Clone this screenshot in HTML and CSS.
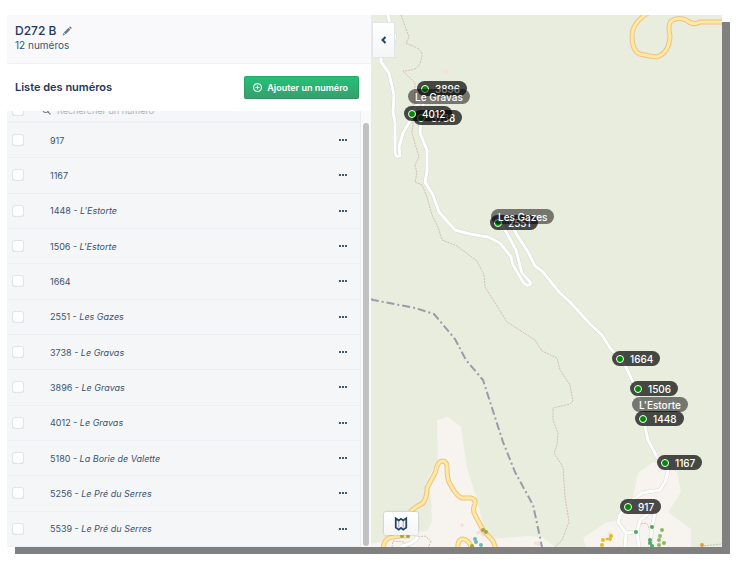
FILE: index.html
```html
<!DOCTYPE html>
<html lang="fr">
<head>
<meta charset="utf-8">
<meta name="viewport" content="width=device-width, initial-scale=1">
<title>D272 B</title>
<link rel="stylesheet" href="styles.css">
</head>
<body>
<main class="window">
  <section class="sidebar">
    <header class="street">
      <h1>D272 B
        <svg class="pencil" viewBox="0 0 16 16" aria-hidden="true"><path d="M1 15l1.200-4 2.800 2.800zM3 10.200l7.600-7.600 2.800 2.800-7.600 7.600zM11.400 1.800l1-1c.9-.9 3.700 1.900 2.800 2.800l-1 1z"/></svg>
      </h1>
      <p>12 numéros</p>
    </header>
    <div class="toolbar">
      <h2>Liste des numéros</h2>
      <button class="add" type="button">
        <svg viewBox="0 0 16 16" aria-hidden="true"><circle cx="8" cy="8" r="7"/><path d="M8 4.500v7M4.500 8h7"/></svg>
        Ajouter un numéro
      </button>
    </div>
    <div class="scroller">
      <div class="list">
        <div class="row search">
          <input type="checkbox" aria-label="Tout sélectionner">
          <svg viewBox="0 0 16 16" aria-hidden="true"><circle cx="6.500" cy="6.500" r="5"/><path d="M10.500 10.500L15 15"/></svg>
          <input type="search" placeholder="Rechercher un numéro" aria-label="Rechercher un numéro">
        </div>
        <div class="row"><input type="checkbox" id="n917"><label for="n917">917</label><button type="button" class="more" aria-label="Options"><i></i><i></i><i></i></button></div>
        <div class="row"><input type="checkbox" id="n1167"><label for="n1167">1167</label><button type="button" class="more" aria-label="Options"><i></i><i></i><i></i></button></div>
        <div class="row"><input type="checkbox" id="n1448"><label for="n1448">1448 - <em>L'Estorte</em></label><button type="button" class="more" aria-label="Options"><i></i><i></i><i></i></button></div>
        <div class="row"><input type="checkbox" id="n1506"><label for="n1506">1506 - <em>L'Estorte</em></label><button type="button" class="more" aria-label="Options"><i></i><i></i><i></i></button></div>
        <div class="row"><input type="checkbox" id="n1664"><label for="n1664">1664</label><button type="button" class="more" aria-label="Options"><i></i><i></i><i></i></button></div>
        <div class="row"><input type="checkbox" id="n2551"><label for="n2551">2551 - <em>Les Gazes</em></label><button type="button" class="more" aria-label="Options"><i></i><i></i><i></i></button></div>
        <div class="row"><input type="checkbox" id="n3738"><label for="n3738">3738 - <em>Le Gravas</em></label><button type="button" class="more" aria-label="Options"><i></i><i></i><i></i></button></div>
        <div class="row"><input type="checkbox" id="n3896"><label for="n3896">3896 - <em>Le Gravas</em></label><button type="button" class="more" aria-label="Options"><i></i><i></i><i></i></button></div>
        <div class="row"><input type="checkbox" id="n4012"><label for="n4012">4012 - <em>Le Gravas</em></label><button type="button" class="more" aria-label="Options"><i></i><i></i><i></i></button></div>
        <div class="row"><input type="checkbox" id="n5180"><label for="n5180">5180 - <em>La Borie de Valette</em></label><button type="button" class="more" aria-label="Options"><i></i><i></i><i></i></button></div>
        <div class="row"><input type="checkbox" id="n5256"><label for="n5256">5256 - <em>Le Pré du Serres</em></label><button type="button" class="more" aria-label="Options"><i></i><i></i><i></i></button></div>
        <div class="row"><input type="checkbox" id="n5539"><label for="n5539">5539 - <em>Le Pré du Serres</em></label><button type="button" class="more" aria-label="Options"><i></i><i></i><i></i></button></div>
      </div>
      <div class="track"><div class="thumb"></div></div>
    </div>
  </section>

  <section class="map" aria-label="Carte">
    <svg class="tiles" viewBox="371 15 351 532" preserveAspectRatio="xMinYMin slice" aria-hidden="true">
      <defs>
        <path id="lane" d="M388 15L391 30 395 36 393 43 381 58 381 62 389 73 394 95 393 112 395 123 395 153Q396 158 400 156L399 147 403 133 410 121 415 107 423 100 423 107 421 120 420 133 427 150 427 172 425 182 433 195 439 212 455 230 470 234 488 237 500 243 511 257 513 265 523 282Q528 288 531 283L522 273 519 262 516 250 505 230 499 220 508 217 517 235 528 252 535 266 542 271 560 293 570 302 590 324 602 335 610 348 619 358 625 365 633 382 641 402 645 427 648 440 657 457 667 465 668 472 665 482 660 490 642 493 630 502 620 515 618 522 626 533 625 547M626 533L637 532 640 520 650 512 655 513 652 527 650 547M637 532L639 547M401 546Q412 545 418 537"/>
        <path id="road" d="M410 512L416 507 423 503Q427 497 427 488L435 473Q438 461 442 461 447 461 447 467 447 480 450 484 457 497 462 498H471Q476 499 475 504 472 510 475 515L483 530 493 541 496 549M383 549Q384 540 389 538 398 535 410 536M458 549Q457 539 463 539 468 539 472 548M648 13Q632 23 632 36 632 51 640 54 648 56 657 57 669 53 670 36 667 22 673 20 679 17 686 20 693 26 700 22H724"/>
      </defs>
      <path fill="#e8edde" d="M371 15h1600v1600H371z"/>
      <path fill="#f7f4ef" d="M437 420L448 417 461 427 467 468 477 499 483 525 492 539 527 536 542 537 556 548H371V544L383 541 397 533 427 531 432 522 431 497 428 478 438 460zM583 538L605 523 615 521 632 500 638 473 653 462 677 472 681 492 668 512 691 529V548H586z"/>
      <path fill="#f5e1d8" d="M444 69l5 1v4l-5-1zM476 532l6-3 4 4-3 4-3-3-3 1zM534 542l5-1 2 5-6-1zM460 524l3-1 1 3-3 1zM607 534l3-3 3 3-3 3z"/>
      <g class="trail">
        <path d="M401 15L409 37 406 43 415 47Q422 50 422 56 420 69 411 70L403 71 415 83 414 113 412 133 419 157 415 165 417 173 415 182 422 185 427 197 432 215 438 227 442 240 457 246 477 261 484 275 485 287 507 322 535 340 542 351 557 358 560 370 570 385 573 401 570 404 553 408 553 420 558 433 557 445 554 453 563 467 565 497 569 522 562 540 555 547"/>
        <path d="M392 547L393 541 404 542 410 547M418 537L425 536 431 541 428 548M641 524q8-3 8 6M701 546L722 544"/>
      </g>
      <use href="#lane" class="lane-edge"/><use href="#lane" class="lane"/>
      <use href="#road" class="road-edge"/><use href="#road" class="road"/>
      <path class="border-line" d="M371 299L373 300 415 308 434 314 455 339 466 360 483 380 503 442 515 472 533 505 538 528 542 547"/>
      <g fill="#a6a63c"><circle cx="483" cy="530" r="2"/><circle cx="486" cy="532" r="2"/><circle cx="402" cy="536" r="2"/><circle cx="408" cy="536" r="2"/><circle cx="472" cy="546" r="2"/></g>
      <g fill="#75b8b2"><circle cx="475" cy="539" r="2"/><circle cx="476" cy="542" r="2"/><circle cx="481" cy="545" r="2"/></g>
      <g fill="#e0bd36"><circle cx="611" cy="536" r="2"/><circle cx="610" cy="539" r="2"/><circle cx="607" cy="539" r="1.500"/><circle cx="603" cy="540" r="2"/><circle cx="602" cy="545" r="2"/></g>
      <g fill="#4da766"><circle cx="636" cy="532" r="2"/><circle cx="652" cy="527" r="2"/><circle cx="650" cy="540" r="2"/><circle cx="650" cy="543" r="2"/><circle cx="652" cy="546" r="2"/></g>
      <g fill="#8abb63"><circle cx="662" cy="530" r="2"/><circle cx="660" cy="536" r="2"/><circle cx="659" cy="540" r="2"/><circle cx="664" cy="543" r="2"/><circle cx="659" cy="545" r="2"/></g>
      <circle cx="702" cy="545" r="2" fill="#dd9a55"/>
    </svg>

    <span class="pin" style="left:46px;top:66px"><i></i>3896</span>
    <span class="pin" style="left:42px;top:95px"><i></i>3738</span>
    <span class="pin" style="left:33px;top:91px"><i></i>4012</span>
    <span class="place" style="left:37px;top:74px">Le Gravas</span>
    <span class="pin" style="left:119px;top:200px"><i></i>2551</span>
    <span class="place" style="left:120px;top:194px">Les Gazes</span>
    <span class="pin" style="left:241px;top:336px"><i></i>1664</span>
    <span class="pin" style="left:259px;top:366px"><i></i>1506</span>
    <span class="place" style="left:261px;top:382px">L'Estorte</span>
    <span class="pin" style="left:264px;top:396px"><i></i>1448</span>
    <span class="pin" style="left:286px;top:440px"><i></i>1167</span>
    <span class="pin" style="left:249px;top:484px"><i></i>917</span>

    <button class="collapse" type="button" aria-label="Réduire"><svg viewBox="0 0 8 10" aria-hidden="true"><path d="M5.500 2L2.500 5l3 3"/></svg></button>
    <button class="layers" type="button" aria-label="Fond de carte"><svg viewBox="0 0 16 16" aria-hidden="true"><path class="fold" d="M5.500 4v8M10.500 4v8"/><path d="M5.500 4L2 1.500v10.500L5.500 14.500 8 12.500l2.500 2L14 12V1.500L10.500 4 8 2z"/></svg></button>
  </section>
</main>
</body>
</html>
```
FILE: styles.css
```css
* { box-sizing: border-box; }

body {
  margin: 0;
  min-height: 100vh;
  padding: 15px 18px 21px 7px;
  display: flex;
  background: #fff;
  color: #3a5470;
  font-family: Inter, "Liberation Sans", sans-serif;
  font-size: 9px;
}

h1, h2, p { margin: 0; }
button { font: inherit; cursor: pointer; }

.window {
  flex: 1;
  display: grid;
  grid-template-columns: minmax(0, 364fr) minmax(0, 351fr);
  box-shadow: 8px 7px 0 #808080;
}

.sidebar {
  display: flex;
  flex-direction: column;
  background: #fff;
}

.street {
  padding: 8px;
  border-bottom: 1px solid #eff1f4;
  background: #f9f9fb;
}

h1, h2 {
  color: #24355f;
  line-height: 15px;
}

h1 {
  display: flex;
  align-items: center;
  gap: 6px;
  font-size: 12px;
  font-weight: 500;
}

h2 { font-size: 11px; font-weight: 600; }

.street p {
  padding-bottom: 3px;
  font-size: 10px;
  line-height: 14px;
}

.pencil {
  width: 10px;
  height: 10px;
  fill: #66788a;
}

.toolbar {
  display: flex;
  align-items: center;
  justify-content: space-between;
  padding: 12px 12px 12px 8px;
}

.add {
  display: flex;
  align-items: center;
  gap: 5px;
  height: 23px;
  padding: 0 11px 0 9px;
  border: 0;
  border-radius: 2px;
  background: linear-gradient(#23c277, #399d6c);
  box-shadow: inset 0 0 0 1px rgba(30, 110, 70, .25);
  color: #fff;
  font-weight: 600;
}

.add svg {
  width: 9px;
  height: 9px;
  fill: none;
  stroke: #fff;
  stroke-width: 2;
}

.scroller {
  flex: 1;
  display: flex;
  overflow: hidden;
}

.list {
  flex: 1;
  display: flex;
  flex-direction: column;
  margin-top: -12px;
  border-right: 1px solid #e9ecef;
  background: #f5f6f7;
}

.row {
  flex: 1 0 32px;
  display: flex;
  align-items: center;
  padding: 0 12px 0 5px;
  border-bottom: 1px solid #edf0f2;
}

.row label { flex: 1; }

.row input[type="checkbox"] {
  appearance: none;
  flex: none;
  width: 12px;
  height: 12px;
  margin: 0 26px 0 0;
  border-radius: 3px;
  background: #fff;
  box-shadow: inset 0 0 0 1px #e1e4e8, inset 0 -1px 1px #cfd5db;
}

.search { flex: 0 0 24px; border-bottom: 2px solid #edf0f2; }
.search input[type="checkbox"] { margin-right: 18px; }

.search svg {
  width: 9px;
  height: 9px;
  fill: none;
  stroke: #66788a;
  stroke-width: 2;
}

.search input[type="search"] {
  flex: 1;
  margin: 0;
  padding: 0 6px;
  border: 0;
  background: none;
  font: inherit;
}

.search input::placeholder { color: #a6b1bb; }

.more {
  display: flex;
  gap: 1px;
  padding: 4px 1px;
  border: 0;
  background: none;
}

.more i {
  width: 2px;
  height: 2px;
  background: #425a70;
}

.track {
  width: 10px;
  padding: 12px 2px 1px;
  background: #fafafa;
}

.thumb {
  height: 100%;
  border-radius: 3px;
  background: #c1c1c1;
}

.map {
  position: relative;
  overflow: hidden;
  background: #e8edde;
}

.tiles {
  position: absolute;
  width: 100%;
  height: 100%;
}

.tiles path, .tiles use { stroke-linejoin: round; }
.trail, .lane-edge, .lane, .road-edge, .road, .border-line { fill: none; }
.trail { stroke: #d3bfb0; stroke-width: 1; stroke-dasharray: 2 1; }
.lane-edge { stroke: #d5d8d0; stroke-width: 4; }
.lane { stroke: #fff; stroke-width: 3; }
.road-edge { stroke: #ecc08c; stroke-width: 5; }
.road { stroke: #ffe99c; stroke-width: 3; }
.border-line { stroke: #9a9bac; stroke-width: 2; stroke-dasharray: 8 3 2 3; }

.pin, .place {
  position: absolute;
  display: flex;
  align-items: center;
  height: 15px;
  border-radius: 8px;
  color: #fff;
  font-size: 10px;
  font-weight: 500;
  white-space: nowrap;
}

.pin {
  gap: 6px;
  padding: 0 7px 0 4px;
  background: rgba(0, 0, 0, .7);
}

.pin i {
  width: 8px;
  height: 8px;
  border: 1px solid #fff;
  border-radius: 50%;
  background: #008a00;
}

.place {
  padding: 0 7px;
  background: rgba(0, 0, 0, .5);
}

.collapse, .layers {
  position: absolute;
  display: grid;
  place-items: center;
  padding: 0;
  border: 0;
  background: linear-gradient(#fff, #f4f5f7);
  box-shadow: inset 0 0 0 1px #e1e5ea;
}

.collapse { left: 1px; top: 7px; width: 23px; height: 36px; }
.layers { left: 13px; bottom: 12px; width: 34px; height: 23px; border-radius: 2px; box-shadow: 0 0 2px #9aa3a8; }

.collapse svg, .layers svg {
  fill: none;
  stroke: #234361;
  stroke-width: 2;
}

.collapse svg { width: 8px; height: 10px; }
.layers svg { width: 14px; height: 14px; }
.layers .fold { stroke: #8c9cab; stroke-width: 1; }
```
